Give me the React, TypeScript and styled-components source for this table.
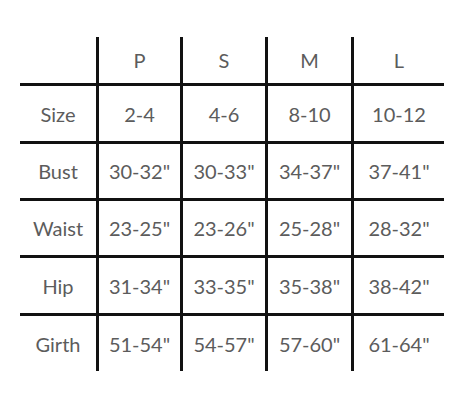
import * as React from 'react'
import styled, { createGlobalStyle } from 'styled-components'

const GlobalStyle = createGlobalStyle`
  html, body {
    margin: 0;
    padding: 0;
    background: #ffffff;
  }
  * {
    box-sizing: border-box;
  }
`

const Page = styled.div`
  width: 464px;
  height: 405px;
  padding: 37px 0 0 20px;

  background: #ffffff;
`

const Chart = styled.div`
  display: grid;
  grid-template-columns: 79px 84px 85px 86px 90px;
  grid-template-rows: 49px 58px 57px 57px 58px 55px;
`

const Cell = styled.div<{ $lastCol: boolean; $lastRow: boolean }>`
  display: flex;
  align-items: center;
  justify-content: center;
  border-right: ${(p) => (p.$lastCol ? 'none' : '3px solid #111')};
  border-bottom: ${(p) => (p.$lastRow ? 'none' : '3px solid #111')};

  font-family: Lato, 'Liberation Sans', sans-serif;
  font-size: 20px;
  font-weight: 400;
  color: #5c5c5c;
  white-space: nowrap;
`

const header = ['', 'P', 'S', 'M', 'L']

const rows: string[][] = [
  ['Size', '2-4', '4-6', '8-10', '10-12'],
  ['Bust', '30-32"', '30-33"', '34-37"', '37-41"'],
  ['Waist', '23-25"', '23-26"', '25-28"', '28-32"'],
  ['Hip', '31-34"', '33-35"', '35-38"', '38-42"'],
  ['Girth', '51-54"', '54-57"', '57-60"', '61-64"'],
]

export default function App() {
  const all = [header, ...rows]
  return (
    <Page>
      <GlobalStyle />
      <Chart>
        {all.map((row, r) =>
          row.map((text, c) => (
            <Cell
              key={`${r}-${c}`}
              $lastCol={c === row.length - 1}
              $lastRow={r === all.length - 1}
            >
              {text}
            </Cell>
          )),
        )}
      </Chart>
    </Page>
  )
}
